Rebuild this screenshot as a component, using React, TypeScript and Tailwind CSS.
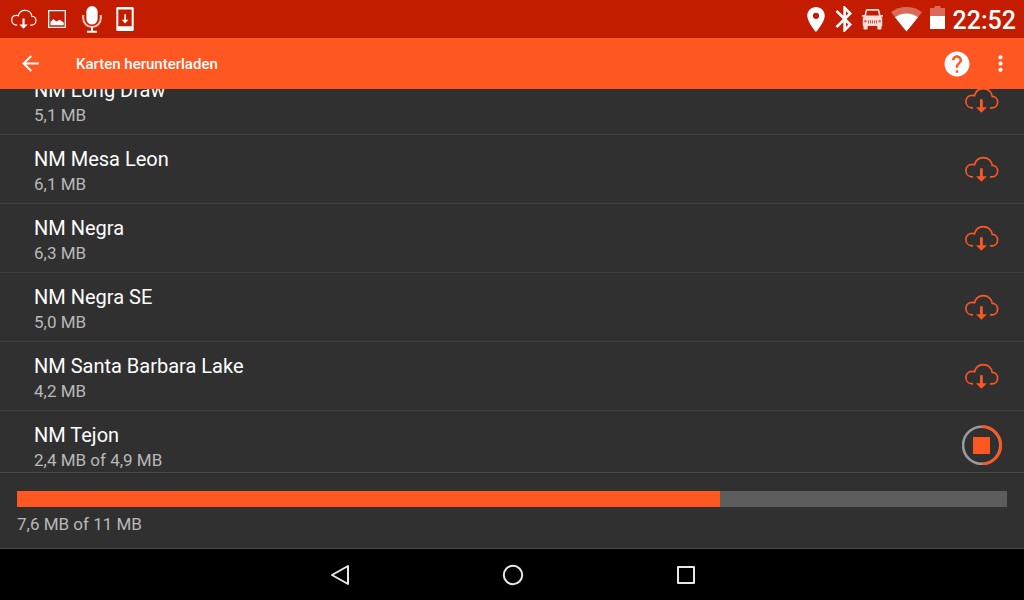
import React from 'react';
import { MdArrowBack, MdHelp, MdMoreVert } from 'react-icons/md';

type MapItem = {
  name: string;
  size: string;
  downloading?: boolean;
};

const maps: MapItem[] = [
  { name: 'NM Long Draw', size: '5,1 MB' },
  { name: 'NM Mesa Leon', size: '6,1 MB' },
  { name: 'NM Negra', size: '6,3 MB' },
  { name: 'NM Negra SE', size: '5,0 MB' },
  { name: 'NM Santa Barbara Lake', size: '4,2 MB' },
  { name: 'NM Tejon', size: '2,4 MB of 4,9 MB', downloading: true },
];

function CloudDownload({ className }: { className?: string }) {
  return (
    <svg viewBox="0 0 34 26" fill="none" className={className}>
      <path
        d="M8 20.9H7.2C3.6 20.7 .9 18.1 .9 14.7C.9 10.9 3.6 8.4 7.2 8.4C8 8.4 8.8 8.5 9.5 8.8C10.6 4.5 14 1.6 18.2 1.6C23.2 1.6 26.8 5 27.2 9.4C30.4 9.4 32.6 11.9 32.6 15C32.6 18.4 30.2 20.9 27 20.9H25"
        stroke="currentColor"
        strokeWidth="1.6"
      />
      <path d="M15 12.2h2.8v8h4l-5.4 5.6-5.4-5.6h4z" fill="currentColor" />
    </svg>
  );
}

function StopIcon() {
  return (
    <svg viewBox="0 0 40 40" fill="none" className="h-10 w-10">
      <circle cx="19.7" cy="20.3" r="18.6" stroke="#9a9a9a" strokeWidth="2.6" />
      <path d="M19.7 1.7A18.6 18.6 0 0 1 20.7 38.9" stroke="#ff5722" strokeWidth="2.8" />
      <path d="M11 12h17v17h-17z" fill="#ff5722" />
    </svg>
  );
}

function StatusBar() {
  return (
    <div className="flex h-[38px] shrink-0 items-center justify-between bg-[#c41c00] pr-2 pl-[11px]">
      <div className="flex items-center">
        <CloudDownload className="h-5 w-[26px]" />
        <svg viewBox="0 0 18 18" fill="none" className="ml-[11px] h-[18px] w-[18px]">
          <path d="M.7.7h16.6v16.6H.7z" stroke="#fff" strokeWidth="1.3" />
          <path d="M2.5 15.3v-3.6l3-2.7 2.7 2.4 3.5-1.6 4 2.8v2.7z" fill="#fff" />
        </svg>
        <svg viewBox="0 0 20 27" fill="none" className="ml-4 h-[27px] w-5">
          <rect x="4.4" y="0" width="11.2" height="18.6" rx="5.6" fill="#fff" />
          <path d="M1.2 9v3.2a8.8 8.8 0 0 0 17.6 0V9" stroke="#f5c6bf" strokeWidth="2" />
          <path d="M10 21v4.5M5 25.8h10" stroke="#fff" strokeWidth="2" />
        </svg>
        <svg viewBox="0 0 18 24" fill="none" className="ml-[14px] h-6 w-[18px]">
          <path fillRule="evenodd" d="M1.5 0h15A1.2 1.2 0 0 1 17.7 1.2v21.6a1.2 1.2 0 0 1-1.2 1.2h-15A1.2 1.2 0 0 1 .3 22.8V1.2A1.2 1.2 0 0 1 1.5 0zM2.3 2.6v16.6h13.4V2.6z" fill="#fff" />
          <path d="M8.3 7.3h1.6v5.5h2.5L9.1 16.6l-3.3-3.8h2.5z" fill="#fff" />
        </svg>
      </div>
      <div className="flex items-center gap-2">
        <svg viewBox="5 2 14 20" fill="#fff" className="h-[25px] w-5">
          <path d="M12 2C8.13 2 5 5.13 5 9c0 5.25 7 13 7 13s7-7.75 7-13c0-3.87-3.13-7-7-7zm0 9.5a2.5 2.5 0 0 1 0-5 2.5 2.5 0 0 1 0 5z" />
        </svg>
        <svg viewBox="5 2 13 20" fill="#fff" className="h-[26px] w-5">
          <path d="M17.71 7.71L12 2h-1v7.59L6.41 5 5 6.41 10.59 12 5 17.59 6.41 19 11 14.41V22h1l5.71-5.71-4.3-4.29 4.3-4.29zM13 5.83l1.88 1.88L13 9.59V5.83zm1.88 10.46L13 18.17v-3.76l1.88 1.88z" />
        </svg>
        <svg viewBox="0 0 20 20" fill="#f9dfda" className="h-[21px] w-[21px]">
          <path d="M4.4 0h11.2l1 1.2 1 4.4H20v1.8h-1.6l.9 1.6v7.2H.7V9l.9-1.6H0V5.600h2.4l1-4.4z" />
          <path d="M1.400 15h4v3.600a1 1 0 0 1-1 1h-2a1 1 0 0 1-1-1zM14.600 15h4v3.600a1 1 0 0 1-1 1h-2a1 1 0 0 1-1-1z" />
          <path d="M4.800 1.700h10.400l.9 4.600H3.900z" fill="#c41c00" />
          <path d="M6.200 10.800v3M8.100 10.800v3M10 10.800v3M11.900 10.800v3M13.800 10.800v3" stroke="#c41c00" strokeWidth=".7" />
          <circle cx="3.200" cy="11.600" r="1.200" fill="#d96a58" />
          <circle cx="16.800" cy="11.600" r="1.200" fill="#d96a58" />
        </svg>
        <svg viewBox="0 0 31 25" fill="#fff" className="h-[25px] w-[31px]">
          <path d="M15.5 24.5L0 5.2C4.4 1.9 9.7 0 15.5 0S26.6 1.9 31 5.2z" fillOpacity=".35" />
          <path d="M15.5 24.5L4 10.2C7.3 7.9 11.2 6.5 15.5 6.5S23.7 7.9 27 10.2z" />
        </svg>
        <svg viewBox="0 0 15 26" fill="#fff" className="h-[26px] w-[15px]">
          <path d="M0 2h4.5V0h6v2H15v8H0z" fillOpacity=".35" />
          <path d="M0 10h15v13H0z" />
        </svg>
        <time className="pt-1 text-[25px] leading-8 font-medium">22:52</time>
      </div>
    </div>
  );
}

function AppBar() {
  return (
    <header className="flex h-[51px] shrink-0 items-center bg-[#ff5722] pr-[11px] pl-[18px]">
      <button type="button" aria-label="Zurück">
        <MdArrowBack size={25} />
      </button>
      <h1 className="ml-[33px] flex-1 text-[15px] leading-5 font-medium">Karten herunterladen</h1>
      <button type="button" aria-label="Hilfe">
        <MdHelp size={30} />
      </button>
      <button type="button" aria-label="Mehr" className="ml-4">
        <MdMoreVert size={25} />
      </button>
    </header>
  );
}

function MapRow({ item }: { item: MapItem }) {
  return (
    <li className="flex h-[69px] shrink-0 items-center justify-between border-b border-[#3f3f3f] pr-[22px] pl-[34px]">
      <div className="pt-0.5">
        <h2 className="text-[20px] leading-7">{item.name}</h2>
        <p className="text-[17px] leading-[22px] text-[#b9b9b9]">{item.size}</p>
      </div>
      <button
        type="button"
        aria-label={item.downloading ? 'Stopp' : 'Herunterladen'}
        className="flex w-10 justify-center text-[#ff5722]"
      >
        {item.downloading ? <StopIcon /> : <CloudDownload className="h-[26px] w-[34px]" />}
      </button>
    </li>
  );
}

function NavBar() {
  return (
    <nav className="flex h-[51px] shrink-0 items-center justify-center bg-black pl-0.5 text-[#e8e8e8]">
      <button type="button" aria-label="Back" className="flex w-[173px] justify-center">
        <svg viewBox="0 0 20 22" fill="none" stroke="currentColor" strokeWidth="2" strokeLinejoin="round" className="h-[22px] w-5">
          <path d="M18 2v18L2 11z" />
        </svg>
      </button>
      <button type="button" aria-label="Home" className="flex w-[173px] justify-center">
        <svg viewBox="0 0 22 22" fill="none" stroke="currentColor" strokeWidth="2" className="h-[22px] w-[22px]">
          <circle cx="11" cy="11" r="9.2" />
        </svg>
      </button>
      <button type="button" aria-label="Recent apps" className="flex w-[173px] justify-center">
        <svg viewBox="0 0 18 18" fill="none" stroke="currentColor" strokeWidth="2" strokeLinejoin="round" className="h-[18px] w-[18px]">
          <path d="M1 1h16v16H1z" />
        </svg>
      </button>
    </nav>
  );
}

export default function App() {
  const progress = 71;

  return (
    <div className="flex h-screen flex-col bg-[#303030] font-[Roboto,sans-serif] text-white">
      <StatusBar />
      <AppBar />
      <main className="flex min-h-0 flex-1 flex-col">
        <div className="min-h-0 flex-1 overflow-hidden">
          {/* list is scrolled partway under the app bar */}
          <ul className="-mt-[23px] flex flex-col">
            {maps.map((item) => (
              <MapRow key={item.name} item={item} />
            ))}
          </ul>
        </div>
        <section className="h-[77px] shrink-0 border-y border-[#4c4c4c] px-[17px] pt-[18px]">
          <div
            role="progressbar"
            aria-label="Download"
            aria-valuenow={progress}
            aria-valuemin={0}
            aria-valuemax={100}
            className="h-4 bg-[#5d5d5d]"
          >
            <div className="h-full bg-[#ff5722]" style={{ width: `${progress}%` }} />
          </div>
          <p className="mt-1.5 text-[17px] leading-[22px] text-[#b9b9b9]">7,6 MB of 11 MB</p>
        </section>
      </main>
      <NavBar />
    </div>
  );
}
